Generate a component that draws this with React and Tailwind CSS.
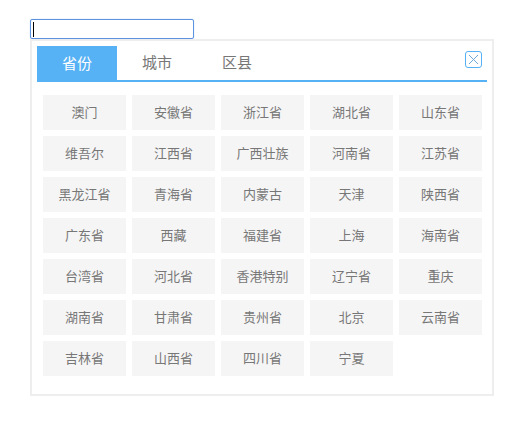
const rows = ["澳门","安徽省","浙江省","湖北省","山东省","维吾尔","江西省","广西壮族","河南省","江苏省","黑龙江省","青海省","内蒙古","天津","陕西省","广东省","西藏","福建省","上海","海南省","台湾省","河北省","香港特别","辽宁省","重庆","湖南省","甘肃省","贵州省","北京","云南省","吉林省","山西省","四川省","宁夏"];

export default function App() {
  return (
    <div className="w-[510px] h-[422px] bg-white pt-[19px] pl-[30px] font-['Liberation_Sans','Noto_Sans_CJK_SC',sans-serif]">
      <div className="w-[164px] h-[20px] border border-[#5b93e0] rounded-[2px] flex items-center pl-[2px] shadow-[0_0_1px_#8fb8ee]">
        <div className="w-px h-[15px] bg-black" />
      </div>
      <div className="w-[464px] h-[357px] border-2 border-[#eeeeee] px-[5px] pt-[5px]">
        <div className="h-[36px] border-b-2 border-[#56b1f5] flex items-start relative">
          <div className="w-[80px] h-[36px] bg-[#56b1f5] text-white text-[15px] flex items-center justify-center">省份</div>
          <div className="w-[80px] h-[34px] text-[#777] text-[15px] flex items-center justify-center">城市</div>
          <div className="w-[10px]" />
          <div className="w-[60px] h-[34px] text-[#777] text-[15px] flex items-center justify-center">区县</div>
          <div className="absolute right-[5px] top-[5px] w-[17px] h-[17px] border border-[#56b1f5] rounded-[3px] flex items-center justify-center">
            <svg width="11" height="11" viewBox="0 0 11 11" fill="none" stroke="#6fa8d8" strokeWidth="1"><path d="M1 1L10 10M10 1L1 10" /></svg>
          </div>
        </div>
        <div className="grid grid-cols-[repeat(5,83px)] auto-rows-[35px] gap-x-[6px] gap-y-[6px] mt-[13px] ml-[6px]">
          {rows.map((n) => (
            <div key={n} className="bg-[#f5f5f5] text-[#777] text-[13px] flex items-center justify-center">{n}</div>
          ))}
        </div>
      </div>
    </div>
  );
}
